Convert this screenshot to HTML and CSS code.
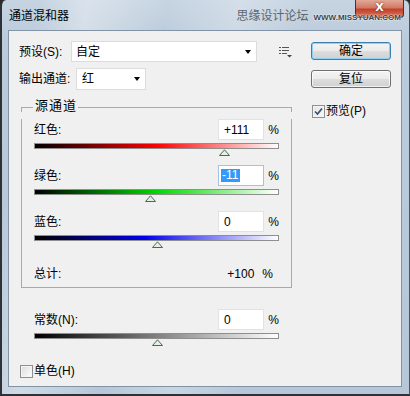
FILE: index.html
```html
<!DOCTYPE html>
<html lang="zh-CN">
<head>
<meta charset="utf-8">
<title>通道混和器</title>
<link rel="stylesheet" href="styles.css">
</head>
<body>
<div class="window">
  <div class="titlebar">
    <span class="title">通道混和器</span>
    <span class="brand">思缘设计论坛</span>
    <span class="url">WWW.MISSYUAN.COM</span>
    <span class="close">X</span>
  </div>
  <div class="client">
    <div class="main">
      <div class="row preset">
        <span class="lbl lbl-preset">预设(S):</span>
        <div class="select select-preset"><span>自定</span><i class="arrow"></i></div>
        <svg class="menu-icon" width="13" height="11" viewBox="0 0 13 11">
          <rect x="0" y="0" width="2" height="1" fill="#555"/>
          <rect x="3" y="0" width="7" height="1" fill="#555"/>
          <rect x="0" y="3" width="2" height="1" fill="#555"/>
          <rect x="3" y="3" width="7" height="1" fill="#555"/>
          <rect x="0" y="6" width="2" height="1" fill="#555"/>
          <rect x="3" y="6" width="5" height="1" fill="#555"/>
          <path d="M8 8 H13 L10.5 10.5 Z" fill="#444"/>
        </svg>
      </div>
      <div class="row output">
        <span class="lbl lbl-output">输出通道:</span>
        <div class="select select-output"><span>红</span><i class="arrow"></i></div>
      </div>
      <div class="group">
        <div class="group-head"><span class="gl gl-a"></span><span class="legend">源通道</span><span class="gl gl-b"></span></div>
        <div class="group-body">
          <div class="channel">
            <div class="ch-row"><span class="lbl">红色:</span><span class="field">+111</span><span class="pct">%</span></div>
            <div class="bar bar-red"></div>
            <div class="track"><span class="sp" style="width:77.75%"></span><svg class="thumb" width="11" height="7" viewBox="0 0 11 7"><path d="M0.5 6.5 L5.5 0.8 L10.5 6.5 Z"/></svg></div>
          </div>
          <div class="channel">
            <div class="ch-row"><span class="lbl">绿色:</span><span class="field focus"><span class="sel">-11</span></span><span class="pct">%</span></div>
            <div class="bar bar-green"></div>
            <div class="track"><span class="sp" style="width:47.25%"></span><svg class="thumb" width="11" height="7" viewBox="0 0 11 7"><path d="M0.5 6.5 L5.5 0.8 L10.5 6.5 Z"/></svg></div>
          </div>
          <div class="channel">
            <div class="ch-row"><span class="lbl">蓝色:</span><span class="field">0</span><span class="pct">%</span></div>
            <div class="bar bar-blue"></div>
            <div class="track"><span class="sp" style="width:50%"></span><svg class="thumb" width="11" height="7" viewBox="0 0 11 7"><path d="M0.5 6.5 L5.5 0.8 L10.5 6.5 Z"/></svg></div>
          </div>
          <div class="total"><span class="lbl">总计:</span><span class="total-val">+100</span><span class="total-pct">%</span></div>
        </div>
      </div>
      <div class="channel constant">
        <div class="ch-row"><span class="lbl">常数(N):</span><span class="field">0</span><span class="pct">%</span></div>
        <div class="bar bar-gray"></div>
        <div class="track"><span class="sp" style="width:50%"></span><svg class="thumb" width="11" height="7" viewBox="0 0 11 7"><path d="M0.5 6.5 L5.5 0.8 L10.5 6.5 Z"/></svg></div>
      </div>
      <div class="check-row mono"><span class="cb"></span><span>单色(H)</span></div>
    </div>
    <div class="side">
      <div class="btn btn-default">确定</div>
      <div class="btn btn-reset">复位</div>
      <div class="check-row preview"><span class="cb checked"><svg width="11" height="11" viewBox="0 0 11 11"><path d="M2 5.5 L4.5 8 L9 2.5" fill="none" stroke="#3d4f6f" stroke-width="1.7"/></svg></span><span>预览(P)</span></div>
    </div>
  </div>
</div>
</body>
</html>
```
FILE: styles.css
```css
* { box-sizing: border-box; }
html, body { margin: 0; padding: 0; }
body {
  font-family: "Liberation Sans", "Noto Sans CJK SC", sans-serif;
  font-size: 12px;
  line-height: 14px;
  color: #000;
  background: #2a2a2a;
}
.window {
  width: 410px;
  height: 396px;
  display: flex;
  flex-direction: column;
  border-left: 2px solid #2e3238;
  border-right: 1px solid #4a5563;
  border-bottom: 2px solid #2e3238;
  border-radius: 6px 6px 0 0;
  background:
    linear-gradient(100deg, rgba(255,255,255,0) 8%, rgba(255,255,255,.35) 18%, rgba(255,255,255,0) 35%, rgba(255,255,255,.25) 50%, rgba(255,255,255,0) 65%),
    linear-gradient(180deg, #c6d4e2 0%, #bccbdb 10%, #b7c7d8 100%);
}
.titlebar {
  height: 30px;
  display: flex;
  align-items: center;
  padding: 0 8px 0 7px;
  position: relative;
  flex: none;
}
.title {
  font-family: "Noto Sans CJK SC", sans-serif;
  font-size: 12px;
  color: #000;
}
.brand {
  margin-left: auto;
  font-family: "Noto Sans CJK SC", sans-serif;
  font-size: 12px;
  color: #5c6670;
  position: relative;
  z-index: 2;
}
.url {
  margin-left: 5px;
  font-size: 8px;
  line-height: 9px;
  font-weight: bold;
  color: #3a3f46;
  margin-top: 5px;
  text-shadow: 0 0 2px #fff, 0 0 1px #fff;
  position: relative;
  z-index: 2;
}
.close {
  position: absolute;
  top: 0;
  right: 5px;
  width: 49px;
  height: 18px;
  border: 1px solid #5b2a22;
  border-top: none;
  border-radius: 0 0 4px 4px;
  background: linear-gradient(180deg, #e4a898 0%, #d07a66 45%, #c4402a 55%, #d5765e 100%);
  color: #fff;
  font-family: "DejaVu Sans", sans-serif;
  font-weight: bold;
  font-size: 11px;
  line-height: 13px;
  padding-top: 1px;
  text-align: center;
  text-shadow: 0 0 2px #5a1a10;
  z-index: 1;
}
.client {
  flex: 1;
  margin: 0 7px 7px 6px;
  border: 1px solid #8393a6;
  background: #f0f0f0;
  display: flex;
}
.main {
  width: 273px;
  margin-left: 10px;
  padding-top: 10px;
  display: flex;
  flex-direction: column;
}
.row { display: flex; align-items: center; }
.preset { height: 21px; }
.output { height: 22px; margin-top: 6px; }
.lbl-preset { width: 52px; }
.lbl-output { width: 57px; }
.select {
  height: 100%;
  background: #fff;
  border: 1px solid #dcdcdc;
  display: flex;
  align-items: center;
  justify-content: space-between;
}
.select-preset { width: 186px; padding: 0 5px 0 4px; }
.select-output { width: 70px; padding: 0 5px 0 5px; }
.arrow {
  width: 0;
  height: 0;
  border-left: 3.5px solid transparent;
  border-right: 3.5px solid transparent;
  border-top: 4px solid #000;
}
.menu-icon { margin-left: 22px; margin-top: 2px; }

.group { margin-top: 10px; margin-left: 2px; }
.group-head { display: flex; height: 12px; }
.gl {
  margin-top: 7px;
  height: 5px;
  border-top: 1px solid #a9a9a9;
}
.gl-a { width: 12px; border-left: 1px solid #a9a9a9; }
.gl-b { flex: 1; border-right: 1px solid #a9a9a9; }
.legend {
  font-size: 13px;
  line-height: 12px;
  letter-spacing: 1px;
  padding: 0 1px 0 2px;
}
.group-body {
  border: 1px solid #a9a9a9;
  border-top: none;
  padding: 0 12px 3px 12px;
}
.channel { display: flex; flex-direction: column; }
.group-body .channel:first-child { margin-top: 7px; }
.ch-row { display: flex; align-items: center; height: 21px; }
.ch-row .lbl { flex: 1; }
.field {
  width: 46px;
  height: 21px;
  background: #fff;
  border: 1px solid #e2e2e2;
  display: flex;
  align-items: center;
  padding-left: 5px;
}
.field.focus { border-color: #a6c2e2; padding-left: 2px; }
.sel {
  background: #3399ff;
  color: #fff;
  line-height: 13px;
  padding: 0 2px 0 1px;
}
.pct { width: 15px; text-align: right; }
.bar {
  height: 6px;
  margin-top: 3px;
  border: 1px solid #8e8e8e;
}
.bar-red { background: linear-gradient(to right, #000 0%, #ff0000 50%, #ffffff 100%); }
.bar-green { background: linear-gradient(to right, #000 0%, #00d800 50%, #ffffff 100%); }
.bar-blue { background: linear-gradient(to right, #000 0%, #0000ee 45%, #ffffff 100%); }
.bar-gray { background: linear-gradient(to right, #000 0%, #ffffff 100%); }
.track { display: flex; height: 16px; }
.sp { flex: none; }
.thumb { flex: none; margin-left: -5px; }
.thumb path { fill: #e6eee6; stroke: #4a6a4e; stroke-width: 1; }
.total { display: flex; align-items: center; height: 21px; margin-top: 6px; }
.total .lbl { flex: 1; }
.total-val { margin-right: 8px; }
.total-pct { margin-right: 6px; }

.constant { margin-top: 21px; padding: 0 13px 0 15px; }
.check-row { display: flex; align-items: center; gap: 1px; }
.cb {
  width: 13px;
  height: 13px;
  border: 1px solid #8f8f8f;
  background: linear-gradient(135deg, #dcdcdc 0%, #f4f4f4 70%, #fff 100%);
  box-shadow: inset 0 0 0 1px #f4f4f4;
  display: flex;
  align-items: center;
  justify-content: center;
}
.cb.checked { background: linear-gradient(135deg, #e2e6ea 0%, #f6f7f8 100%); }
.mono { margin-top: 9px; margin-left: 1px; }

.side {
  width: 80px;
  margin-left: 19px;
  padding-top: 11px;
  display: flex;
  flex-direction: column;
}
.btn {
  height: 18px;
  border: 1px solid #707070;
  border-radius: 3px;
  background: linear-gradient(180deg, #f4f4f4 0%, #ebebeb 50%, #dddddd 51%, #d0d0d0 100%);
  display: flex;
  align-items: center;
  justify-content: center;
  box-shadow: inset 0 0 0 1px rgba(255,255,255,.7);
}
.btn-default {
  border-color: #3c7fb1;
  box-shadow: inset 0 0 0 1px #8fd0f3;
}
.btn-reset { margin-top: 10px; }
.preview { margin-top: 16px; margin-left: 1px; }
```
